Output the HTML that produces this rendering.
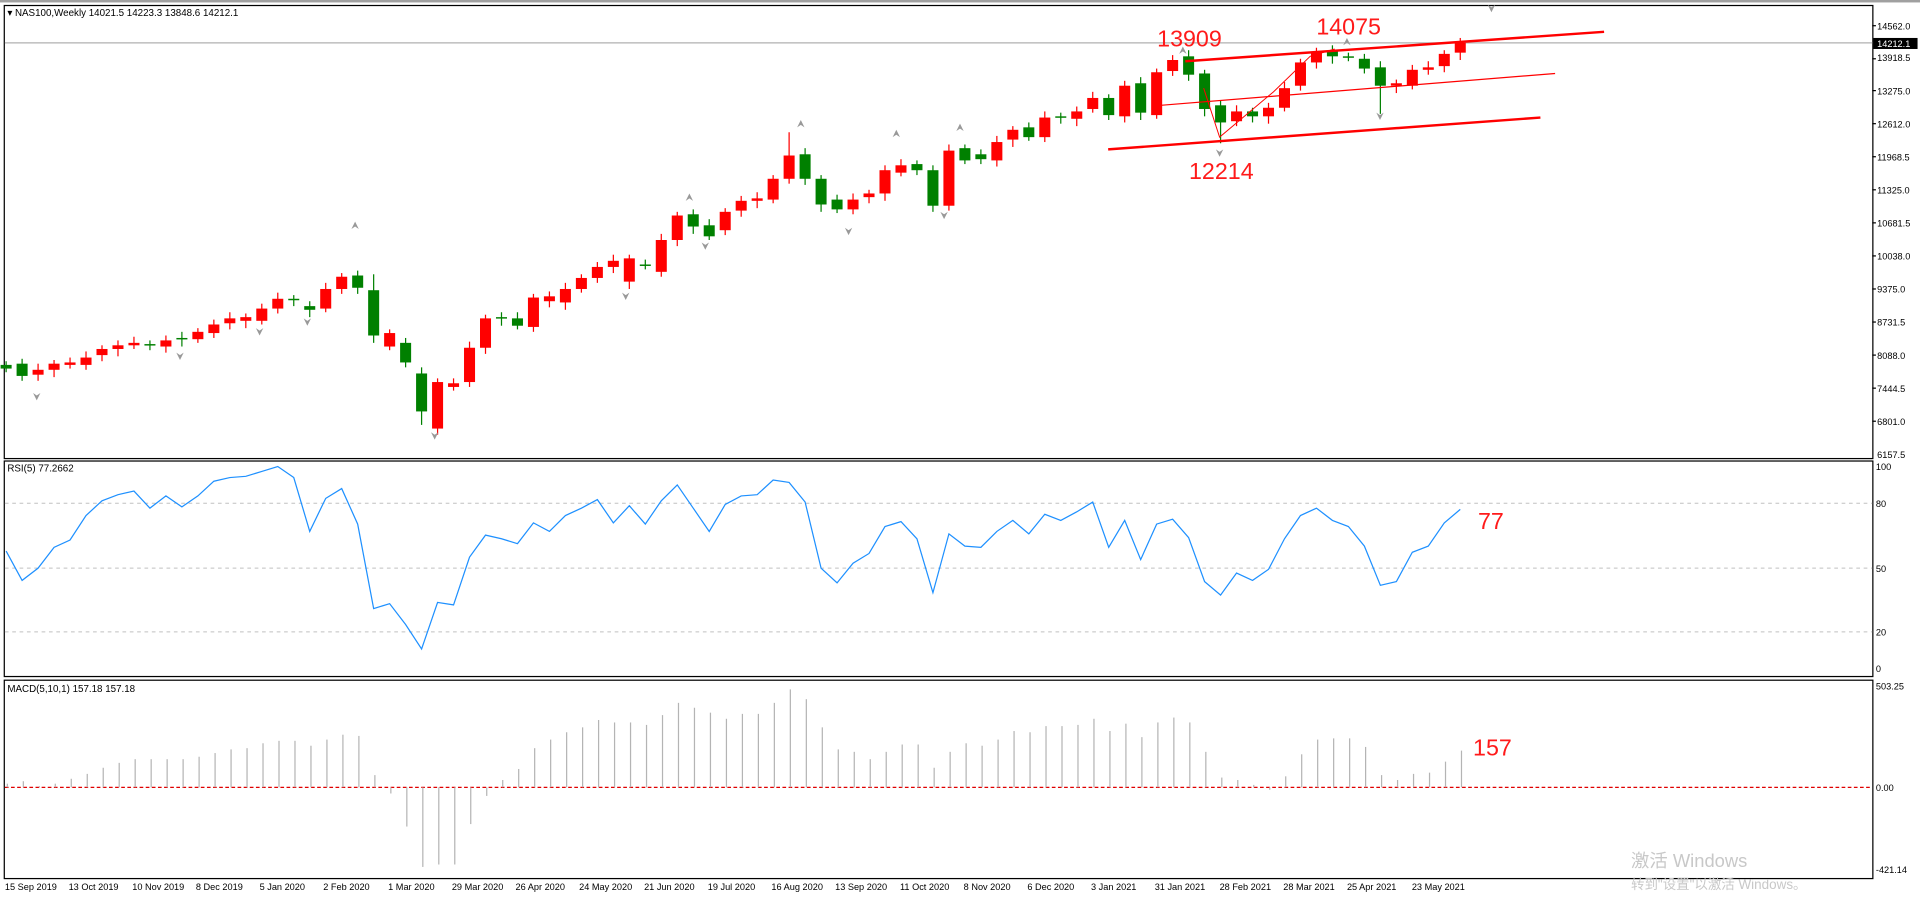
<!DOCTYPE html>
<html><head><meta charset="utf-8"><style>
html,body{margin:0;padding:0;background:#fff;width:1920px;height:900px;overflow:hidden}
svg{display:block}
text{font-family:"Liberation Sans","Noto Sans CJK SC",sans-serif}
</style></head><body>
<svg id="s" width="1920" height="900" viewBox="0 0 1568 735" preserveAspectRatio="none" xmlns="http://www.w3.org/2000/svg">
<rect x="0" y="0" width="1568" height="735" fill="#fff"/>
<rect x="0" y="0" width="1568" height="2" fill="#a0a0a0"/>
<!-- panels -->
<rect x="3.5" y="4.5" width="1526" height="370" fill="none" stroke="#000" stroke-width="1"/>
<rect x="3.5" y="376.5" width="1526" height="176" fill="none" stroke="#000" stroke-width="1"/>
<rect x="3.5" y="555.5" width="1526" height="162" fill="none" stroke="#000" stroke-width="1"/>
<line x1="4" y1="35" x2="1529" y2="35" stroke="#b0b0b0" stroke-width="1"/>
<!-- RSI levels -->
<g stroke="#c0c0c0" stroke-dasharray="3,3" stroke-width="0.8">
<line x1="4" y1="411" x2="1529" y2="411"/><line x1="4" y1="464" x2="1529" y2="464"/><line x1="4" y1="516" x2="1529" y2="516"/>
</g>
<line x1="4" y1="643" x2="1529" y2="643" stroke="#e00000" stroke-dasharray="3,2" stroke-width="1"/>
<g id="g"></g>
<!-- trendlines -->
<g stroke="#ff0000" fill="none">
<line x1="968" y1="50" x2="1310" y2="26" stroke-width="2"/>
<line x1="948" y1="86" x2="1270" y2="60" stroke-width="1"/>
<line x1="905" y1="122" x2="1258" y2="96" stroke-width="2"/>
<polyline points="983,72 996,112 1040,75 1070,46 1090,40" stroke-width="0.8"/>
</g>
<g fill="#ff1a1a" font-size="19">
<text x="945" y="38">13909</text>
<text x="1075" y="28">14075</text>
<text x="971" y="146">12214</text>
<text x="1207" y="432">77</text>
<text x="1203" y="617">157</text>
</g>
<g font-size="8" fill="#000">
<text x="6" y="13">▾ NAS100,Weekly  14021.5 14223.3 13848.6 14212.1</text>
<text x="6" y="385">RSI(5) 77.2662</text>
<text x="6" y="565">MACD(5,10,1) 157.18 157.18</text>
</g>
<!-- right axis -->
<g font-size="7.5" fill="#000">
<text x="1533" y="24">14562.0</text>
<rect x="1530" y="31" width="36" height="9" fill="#000"/>
<text x="1533" y="38.5" fill="#fff">14212.1</text>
<text x="1533" y="50">13918.5</text>
<text x="1533" y="77">13275.0</text>
<text x="1533" y="104">12612.0</text>
<text x="1533" y="131">11968.5</text>
<text x="1533" y="158">11325.0</text>
<text x="1533" y="185">10681.5</text>
<text x="1533" y="212">10038.0</text>
<text x="1533" y="239">9375.0</text>
<text x="1533" y="266">8731.5</text>
<text x="1533" y="293">8088.0</text>
<text x="1533" y="320">7444.5</text>
<text x="1533" y="347">6801.0</text>
<text x="1533" y="374">6157.5</text>
<text x="1532" y="384">100</text>
<text x="1532" y="414">80</text>
<text x="1532" y="467">50</text>
<text x="1532" y="519">20</text>
<text x="1532" y="549">0</text>
<text x="1532" y="563">503.25</text>
<text x="1532" y="646">0.00</text>
<text x="1532" y="713">-421.14</text>
</g>
<g stroke="#000" stroke-width="1">
<line x1="1529" y1="21" x2="1532" y2="21"/><line x1="1529" y1="48" x2="1532" y2="48"/><line x1="1529" y1="74" x2="1532" y2="74"/><line x1="1529" y1="101" x2="1532" y2="101"/><line x1="1529" y1="128" x2="1532" y2="128"/><line x1="1529" y1="155" x2="1532" y2="155"/><line x1="1529" y1="182" x2="1532" y2="182"/><line x1="1529" y1="209" x2="1532" y2="209"/><line x1="1529" y1="236" x2="1532" y2="236"/><line x1="1529" y1="263" x2="1532" y2="263"/><line x1="1529" y1="290" x2="1532" y2="290"/><line x1="1529" y1="317" x2="1532" y2="317"/><line x1="1529" y1="344" x2="1532" y2="344"/>
</g>
<!-- dates -->
<g font-size="7.5" fill="#000">
<text x="4" y="727">15 Sep 2019</text><text x="56" y="727">13 Oct 2019</text><text x="108" y="727">10 Nov 2019</text><text x="160" y="727">8 Dec 2019</text><text x="212" y="727">5 Jan 2020</text><text x="264" y="727">2 Feb 2020</text><text x="317" y="727">1 Mar 2020</text><text x="369" y="727">29 Mar 2020</text><text x="421" y="727">26 Apr 2020</text><text x="473" y="727">24 May 2020</text><text x="526" y="727">21 Jun 2020</text><text x="578" y="727">19 Jul 2020</text><text x="630" y="727">16 Aug 2020</text><text x="682" y="727">13 Sep 2020</text><text x="735" y="727">11 Oct 2020</text><text x="787" y="727">8 Nov 2020</text><text x="839" y="727">6 Dec 2020</text><text x="891" y="727">3 Jan 2021</text><text x="943" y="727">31 Jan 2021</text><text x="996" y="727">28 Feb 2021</text><text x="1048" y="727">28 Mar 2021</text><text x="1100" y="727">25 Apr 2021</text><text x="1153" y="727">23 May 2021</text>
</g>
<g fill="#c8c8c8">
<text x="1332" y="708" font-size="15">激活 Windows</text>
<text x="1332" y="726" font-size="11">转到"设置"以激活 Windows。</text>
</g>
</svg>
<script>
var d=[[298,301],[297,307],[306,302],[302,297],[298,296],[298,292],[290,285],[285,282],[282,280],[281,282],[283,278],[276,277],[277,271],[272,265],[264,260],[262,259],[262,252],[252,244],[244,245],[250,253],[252,236],[236,226],[225,235],[237,274],[283,272],[280,296],[305,336],[350,312],[316,313],[312,284],[284,260],[259,260],[260,266],[267,243],[246,242],[247,236],[236,227],[227,218],[218,213],[230,211],[216,217],[222,196],[196,176],[175,185],[184,193],[188,173],[172,164],[164,162],[163,146],[146,127],[126,146],[146,167],[163,171],[171,163],[161,158],[158,139],[141,135],[134,139],[139,168],[168,123],[121,131],[126,130],[131,116],[114,106],[104,112],[112,96],[95,96],[97,91],[89,80],[80,94],[95,70],[68,92],[94,59],[58,49],[46,61],[60,89],[86,100],[99,91],[91,95],[95,88],[88,72],[70,51],[51,43],[42,46],[46,47],[48,56],[55,70],[70,68],[70,57],[57,55],[54,44],[43,35]];
var rsi=[450,474,464,447,441,421,409,404,401,415,405,414,405,393,390,389,385,381,390,434,407,399,428,497,493,510,530,492,494,455,437,440,444,427,434,421,415,408,427,413,428,409,396,415,434,412,405,404,392,394,410,464,476,460,452,430,426,440,484,436,446,447,434,425,436,420,425,418,410,447,425,457,428,424,439,475,486,468,474,465,440,421,415,425,430,446,478,475,451,446,427,416];
var mac=[640,638,642,640,636,632,627,623,620,620,620,620,618,615,612,611,607,605,605,609,604,600,601,633,648,675,708,706,706,673,650,637,628,611,604,598,594,588,590,590,592,584,574,578,582,587,583,583,574,563,571,594,612,614,620,614,608,608,627,614,607,609,604,597,598,593,593,592,587,597,591,602,590,586,590,614,635,637,641,645,634,616,604,603,603,610,633,637,632,631,622,613];
var h='',pts=[];
for(var i=0;i<d.length;i++){var x=5+13.05*i,o=d[i][0],c=d[i][1],up=c<o,col=up?'#ff0000':'#008000';
var t=Math.min(o,c),b=Math.max(o,c);
var hi=t-3-(i%3),lo=b+3+(i%4);
if(i==86)lo=93; if(i==26)lo=347; if(i==27)lo=355; if(i==49)hi=108; if(i==59)lo=172; if(i==23)hi=224;if(i==76)lo=117;
h+='<line x1="'+x+'" y1="'+hi+'" x2="'+x+'" y2="'+lo+'" stroke="'+col+'" stroke-width="1"/>';
h+='<rect x="'+(x-4.5)+'" y="'+t+'" width="9" height="'+Math.max(b-t,1.2)+'" fill="'+col+'"/>';
pts.push(x+','+rsi[i]);
var m=mac[i];h+='<line x1="'+(x+1)+'" y1="643" x2="'+(x+1)+'" y2="'+m+'" stroke="#b4b4b4" stroke-width="1"/>';
}
var fr=[[30,325,1],[147,292,1],[212,272,1],[251,264,1],[290,183,0],[355,357,1],[511,243,1],[563,160,0],[576,202,1],[654,100,0],[693,190,1],[732,108,0],[771,177,1],[784,103,0],[966,40,0],[996,126,1],[1100,33,0],[1127,96,1],[1218,8,1]];
fr.forEach(function(f){var x=f[0],y=f[1];h+= f[2]?'<path d="M'+(x-3)+' '+(y-4)+' L'+x+' '+(y+2)+' L'+(x+3)+' '+(y-4)+' L'+x+' '+(y-2)+'Z" fill="#999"/>':'<path d="M'+(x-3)+' '+(y+4)+' L'+x+' '+(y-2)+' L'+(x+3)+' '+(y+4)+' L'+x+' '+(y+2)+'Z" fill="#999"/>';});
h+='<polyline points="'+pts.join(' ')+'" fill="none" stroke="#1e90ff" stroke-width="1"/>';
document.getElementById('g').innerHTML=h;
</script>
</body></html>
